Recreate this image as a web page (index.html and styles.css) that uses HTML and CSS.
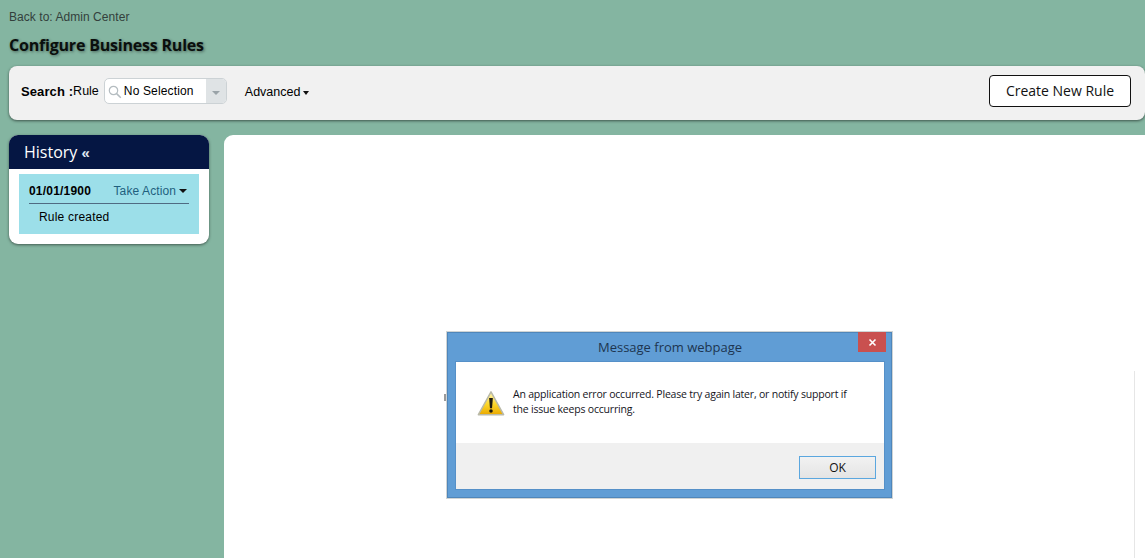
FILE: index.html
```html
<!DOCTYPE html>
<html lang="en">
<head>
  <meta charset="UTF-8">
  <meta name="viewport" content="width=device-width, initial-scale=1.0">
  <title>Configure Business Rules</title>
  <link rel="stylesheet" href="styles.css">
</head>
<body>
  <a class="back-link" href="#">Back to: Admin Center</a>
  <h1>Configure Business Rules</h1>

  <!-- Search bar -->
  <div class="toolbar">
    <span class="search-label">Search :</span>
    <span class="rule-label">Rule</span>
    <div class="combo">
      <svg class="search-icon" width="14" height="14" viewBox="0 0 14 14">
        <circle cx="5.5" cy="5.5" r="4.2" fill="none" stroke="#b4bcc0" stroke-width="1.2"/>
        <path d="M8.6 8.6L12.8 12.8" stroke="#b4bcc0" stroke-width="1.5"/>
      </svg>
      <span class="combo-text">No Selection</span>
      <span class="combo-arrow"><i class="caret caret-grey"></i></span>
    </div>
    <span class="advanced">Advanced<i class="caret"></i></span>
    <button class="create-button">Create New Rule</button>
  </div>

  <div class="main">
    <!-- History -->
    <div class="history">
      <div class="history-head">History <span class="collapse">«</span></div>
      <div class="history-body">
        <div class="history-item">
          <div class="item-top">
            <b>01/01/1900</b>
            <span class="take-action">Take Action<i class="caret"></i></span>
          </div>
          <div class="item-text">Rule created</div>
        </div>
      </div>
    </div>
    <div class="content">
      <div class="content-edge"></div>
    </div>
  </div>

  <!-- Message box -->
  <div class="dialog">
    <div class="dialog-title">
      Message from webpage
      <span class="dialog-close">
        <svg width="9" height="9" viewBox="0 0 9 9">
          <path d="M1.5 1.5L7.5 7.5M7.5 1.5L1.5 7.5" stroke="#fff" stroke-width="1.6"/>
        </svg>
      </span>
    </div>
    <div class="dialog-inner">
      <div class="dialog-message">
        <svg class="warn-icon" width="28" height="27" viewBox="0 0 30 28">
          <defs>
            <linearGradient id="warn" x1="0" y1="0" x2="0" y2="1">
              <stop offset="0" stop-color="#fff6b8"/>
              <stop offset="0.55" stop-color="#fbd62a"/>
              <stop offset="1" stop-color="#eaa900"/>
            </linearGradient>
          </defs>
          <path d="M15 1.5L28.5 26H1.5Z" fill="url(#warn)" stroke="#b9b9a8" stroke-width="1.6" stroke-linejoin="round"/>
          <path d="M13 8h4l-.9 11h-2.2Z" fill="#1d1a10"/>
          <circle cx="15" cy="22" r="1.9" fill="#1d1a10"/>
        </svg>
        <p>An application error occurred. Please try again later, or notify support if the issue keeps occurring.</p>
      </div>
      <div class="dialog-footer">
        <button class="ok-button">OK</button>
      </div>
    </div>
  </div>
</body>
</html>
```

FILE: styles.css
```css
/* General */
body {
  font-family: 'Liberation Sans', Arial, sans-serif;
  font-size: 12px;
  background: #84b5a1;
  color: #000;
  margin: 0;
  padding: 10px 0 0 9px;
  height: 548px;
  overflow: hidden;
}

.back-link {
  display: block;
  height: 14px;
  line-height: 14px;
  letter-spacing: 0.05px;
  color: #33403c;
  text-decoration: none;
}

h1 {
  font-family: 'Open Sans', sans-serif;
  font-size: 16px;
  font-weight: 700;
  line-height: 22px;
  letter-spacing: -0.2px;
  margin: 10px 0 10px;
  color: #0a0f0d;
  text-shadow: 1px 1px 3px rgba(0, 0, 0, 0.45);
}

.caret {
  display: inline-block;
  margin-left: 3px;
  vertical-align: 2px;
  border-top: 4px solid #111;
  border-left: 4px solid transparent;
  border-right: 4px solid transparent;
}

.caret-grey {
  margin: 0;
  vertical-align: 0;
  border-top-color: #9aa3a8;
}

/* Search bar */
.toolbar {
  display: flex;
  align-items: center;
  height: 54px;
  box-sizing: border-box;
  padding: 0 14px 4px 12px;
  background: #f1f1f1;
  border-radius: 8px;
  box-shadow: 0 1px 3px rgba(0, 0, 0, 0.55);
}

.search-label {
  font-weight: 700;
  font-size: 13px;
  letter-spacing: 0.1px;
  white-space: nowrap;
}

.rule-label {
  font-size: 12.5px;
  margin-right: 5px;
}

.combo {
  display: flex;
  align-items: center;
  width: 121px;
  height: 24px;
  background: #fff;
  border: 1px solid #ccd2d5;
  border-radius: 5px;
  overflow: hidden;
}

.search-icon {
  margin-left: 3px;
  margin-top: 2px;
  flex: none;
}

.combo-text {
  flex: 1;
  margin-left: 2px;
  white-space: nowrap;
  letter-spacing: 0.15px;
}

.combo-arrow {
  display: flex;
  align-items: center;
  justify-content: center;
  width: 20px;
  height: 100%;
  padding-top: 3px;
  box-sizing: border-box;
  background: #dfe3e5;
}

.advanced {
  margin: 1px 0 0 18px;
  font-size: 12.5px;
}

.advanced .caret {
  border-left-width: 3.5px;
  border-right-width: 3.5px;
  vertical-align: 1px;
}

.create-button {
  margin-left: auto;
  width: 142px;
  height: 32px;
  padding: 0 0 2px;
  font-family: 'Open Sans', sans-serif;
  font-size: 14px;
  color: #111;
  background: #fff;
  border: 1px solid #111;
  border-radius: 4px;
}

/* Main columns */
.main {
  display: flex;
  align-items: flex-start;
  gap: 15px;
  margin-top: 15px;
}

.history {
  width: 200px;
  flex: none;
  background: #fff;
  border-radius: 9px;
  box-shadow: 0 1px 3px rgba(0, 0, 0, 0.5);
  overflow: hidden;
}

.history-head {
  height: 34px;
  line-height: 34px;
  padding-left: 15px;
  font-family: 'Open Sans', sans-serif;
  font-size: 16px;
  color: #fff;
  background: #051643;
}

.collapse {
  font-family: 'Liberation Sans', Arial, sans-serif;
  font-size: 15px;
  font-weight: 700;
  color: #dfe6f0;
}

.history-body {
  padding: 5px 10px 10px;
}

.history-item {
  height: 60px;
  padding: 0 10px;
  background: #9cdfe9;
}

.item-top {
  display: flex;
  justify-content: space-between;
  align-items: center;
  height: 30px;
  box-sizing: border-box;
  padding: 4px 2px 0 0;
  border-bottom: 1px solid #4f6b82;
}

.item-top b {
  letter-spacing: 0.2px;
}

.take-action {
  color: #1f5f7e;
  letter-spacing: 0.1px;
  white-space: nowrap;
}

.item-text {
  padding: 6px 0 0 10px;
  letter-spacing: 0.2px;
}

.content {
  position: relative;
  flex: 1;
  height: 430px;
  background: #fff;
  border-radius: 9px 0 0 0;
}

.content-edge {
  position: absolute;
  left: 910px;
  top: 236px;
  bottom: 0;
  width: 1px;
  background: #e6e6e6;
}

/* Message box */
.dialog {
  position: absolute;
  left: 447px;
  top: 332px;
  width: 445px;
  height: 166px;
  box-sizing: border-box;
  padding: 0 6px 7px 7px;
  display: flex;
  flex-direction: column;
  background: #609dd5;
  border: 1px solid #4f86ba;
  box-shadow: 0 0 0 1px #d0d4d4;
}

/* bit of the spinner peeking out from behind the box */
.dialog::before {
  content: "";
  position: absolute;
  left: -4px;
  top: 61px;
  width: 2px;
  height: 7px;
  background: #9a9a9a;
}

.dialog-title {
  position: relative;
  height: 28px;
  line-height: 29px;
  flex: none;
  text-align: center;
  font-family: 'Open Sans', sans-serif;
  font-size: 13px;
  color: #1d3550;
}

.dialog-close {
  position: absolute;
  top: -1px;
  right: -1px;
  width: 28px;
  height: 20px;
  display: flex;
  align-items: center;
  justify-content: center;
  background: #c9504f;
}

.dialog-inner {
  flex: 1;
  display: flex;
  flex-direction: column;
  background: #fff;
  border: 1px solid #5590c8;
}

.dialog-message {
  display: flex;
  height: 81px;
  padding: 25px 20px 0 21px;
  box-sizing: border-box;
}

.warn-icon {
  flex: none;
  margin: 3px 8px 0 0;
}

.dialog-message p {
  margin: 0;
  font-family: 'Open Sans', sans-serif;
  font-size: 10.5px;
  line-height: 15px;
  letter-spacing: -0.2px;
  color: #14141c;
}

.dialog-footer {
  flex: 1;
  display: flex;
  justify-content: flex-end;
  align-items: center;
  padding: 3px 8px 0 0;
  background: #f0f0f0;
}

.ok-button {
  width: 77px;
  height: 23px;
  padding: 0;
  font-family: 'Open Sans', sans-serif;
  font-size: 12px;
  color: #111;
  background: linear-gradient(#f2f2f2, #e4e4e4);
  border: 1px solid #5ba7df;
}
```
